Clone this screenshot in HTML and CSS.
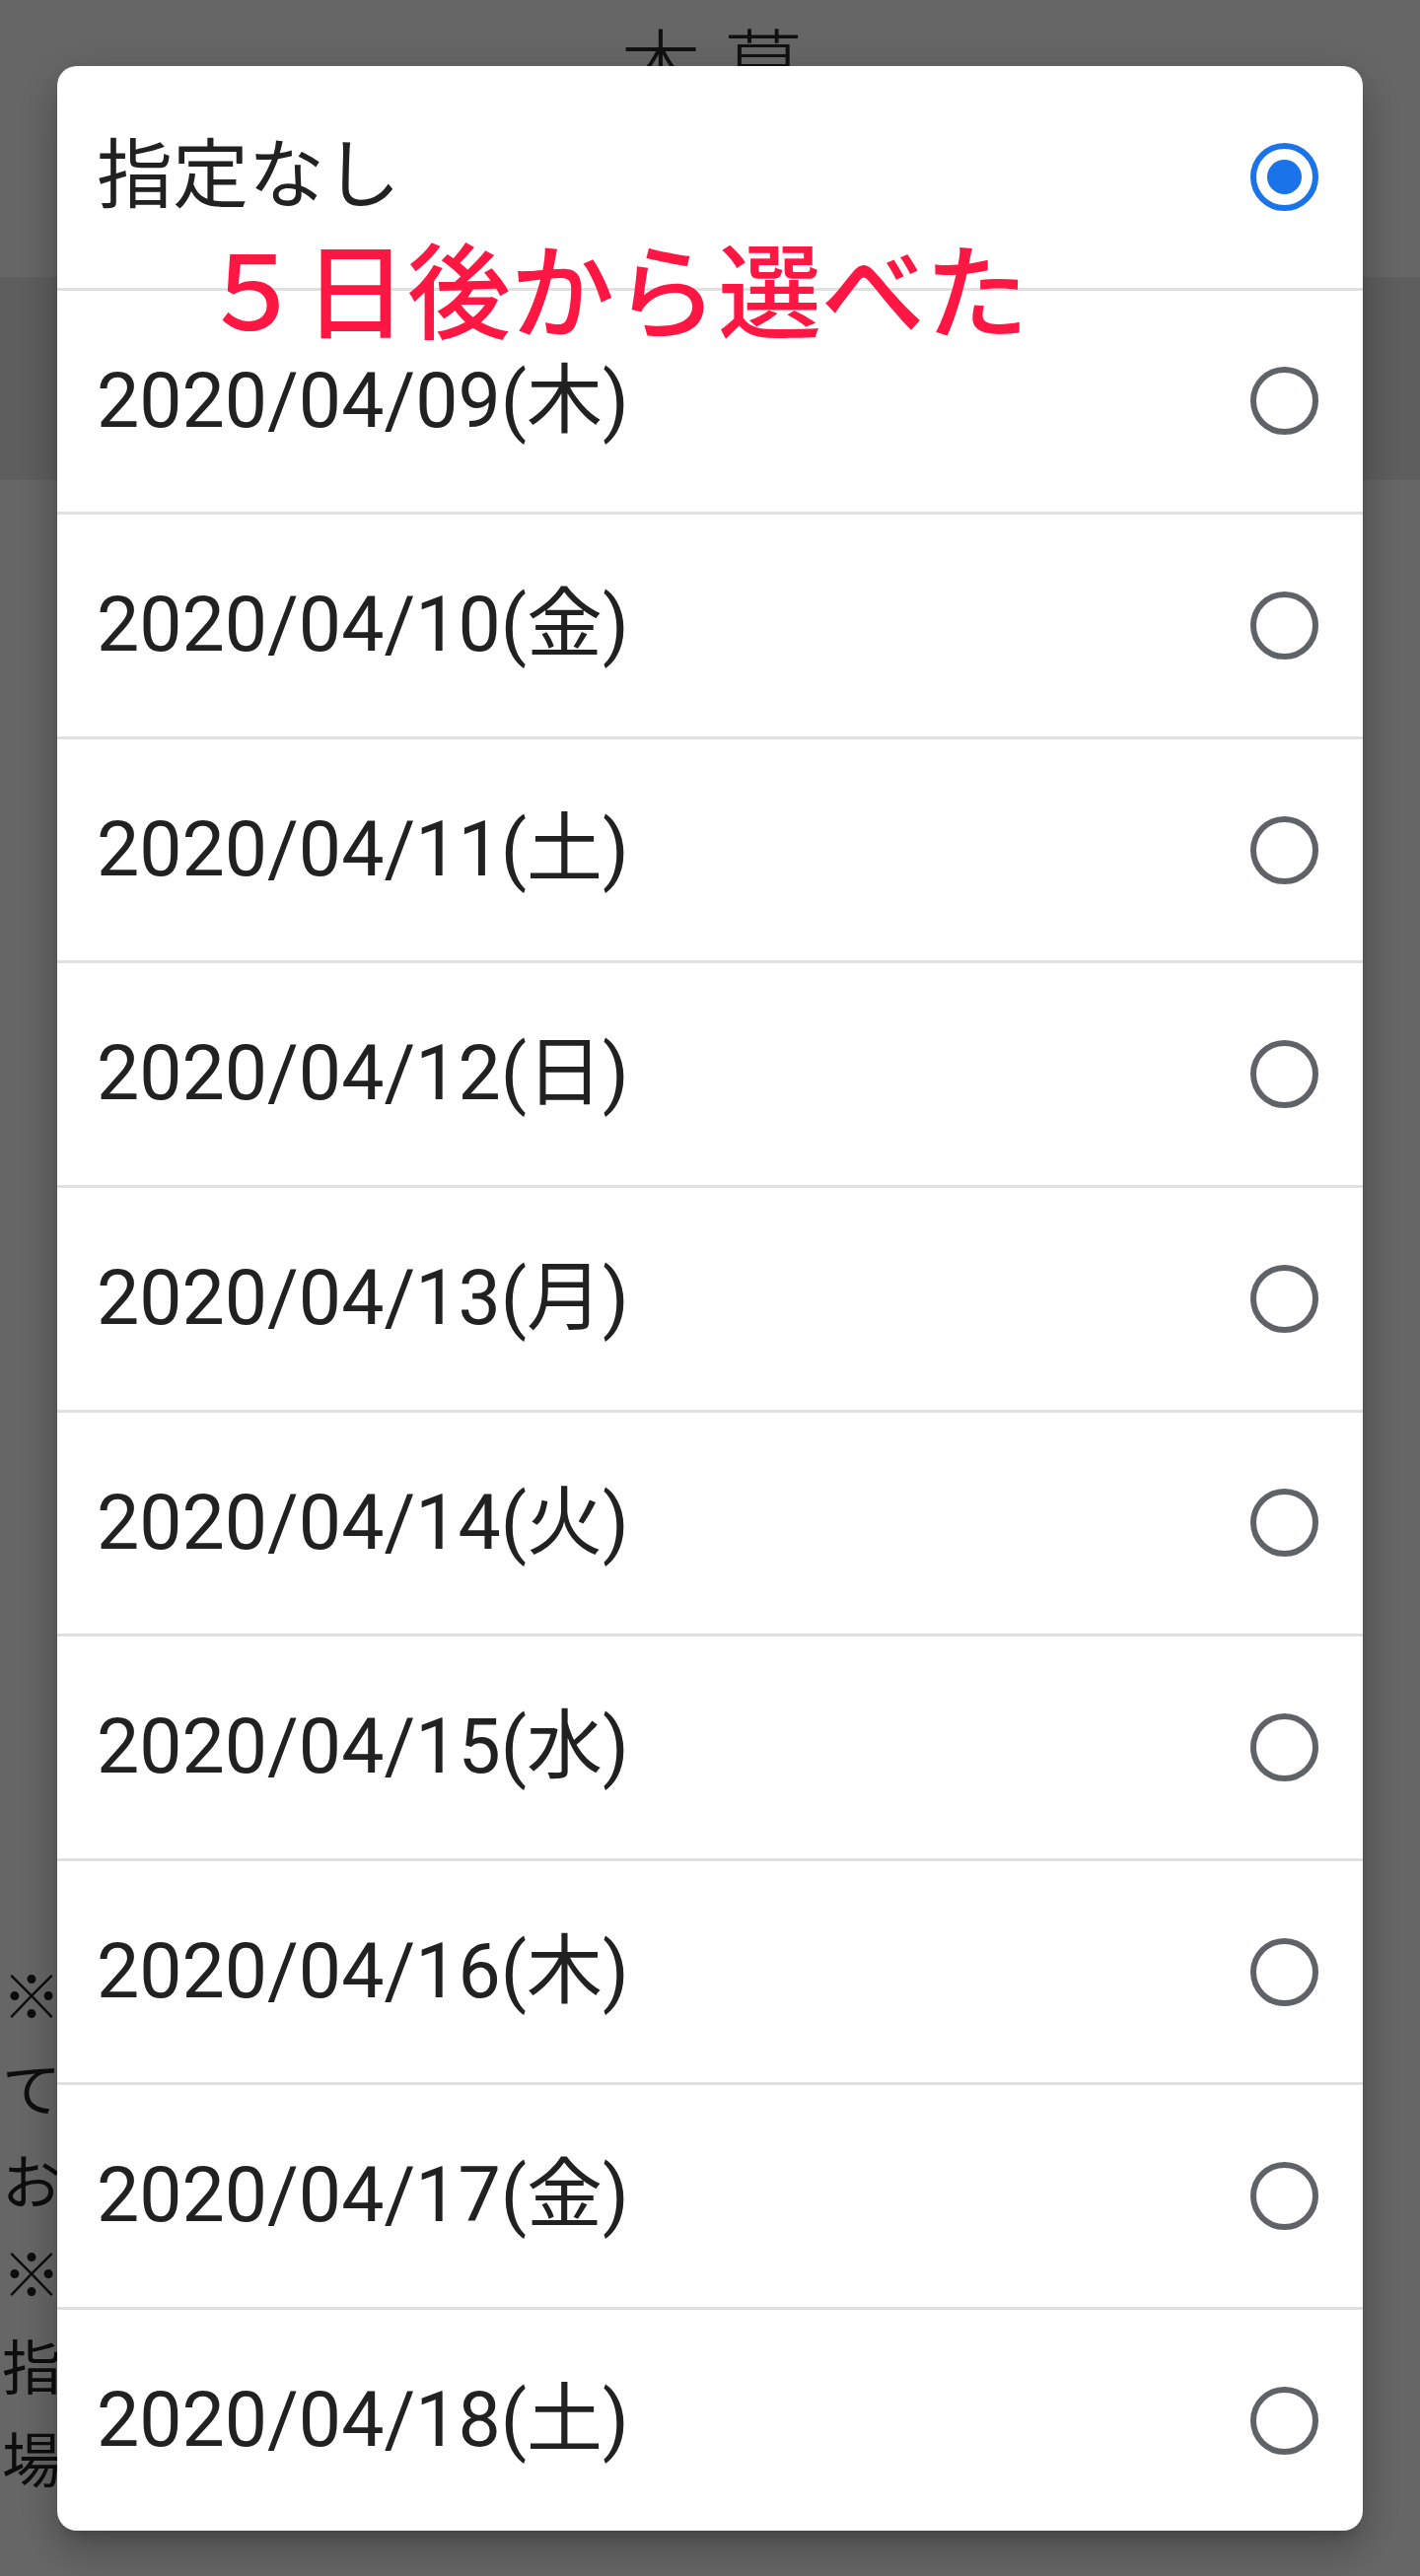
FILE: index.html
```html
<!DOCTYPE html>
<html lang="ja">
<head>
<meta charset="utf-8">
<title>お届け日指定</title>
<link rel="stylesheet" href="styles.css">
</head>
<body>
<div class="page">
  <header class="page-header">
    <h1 class="page-title">本募</h1>
  </header>
  <div class="page-band"></div>
  <div class="page-body">
    <div class="notes">
      <p class="note-line">※お届け日はご注文日より５日後以降の日を指定し</p>
      <p class="note-line">てください。</p>
      <p class="note-line">お届け日の指定がない場合は最短でお届けします。</p>
      <p class="note-line">※天候・交通事情等によりお届けが遅れる場合や、</p>
      <p class="note-line">指定日にお届けできない</p>
      <p class="note-line">場合がございます。</p>
    </div>
  </div>
</div>

<div class="scrim">
  <div class="dialog" role="dialog">
    <ul class="options">
      <li class="option"><span class="label">指定なし</span><span class="radio checked"></span></li>
      <li class="option"><span class="label">2020/04/09(木)</span><span class="radio"></span></li>
      <li class="option"><span class="label">2020/04/10(金)</span><span class="radio"></span></li>
      <li class="option"><span class="label">2020/04/11(土)</span><span class="radio"></span></li>
      <li class="option"><span class="label">2020/04/12(日)</span><span class="radio"></span></li>
      <li class="option"><span class="label">2020/04/13(月)</span><span class="radio"></span></li>
      <li class="option"><span class="label">2020/04/14(火)</span><span class="radio"></span></li>
      <li class="option"><span class="label">2020/04/15(水)</span><span class="radio"></span></li>
      <li class="option"><span class="label">2020/04/16(木)</span><span class="radio"></span></li>
      <li class="option"><span class="label">2020/04/17(金)</span><span class="radio"></span></li>
      <li class="option"><span class="label">2020/04/18(土)</span><span class="radio"></span></li>
    </ul>
    <p class="annotation">５日後から選べた</p>
  </div>
</div>
</body>
</html>
```

FILE: styles.css
```css
* {
  box-sizing: border-box;
}

html, body {
  margin: 0;
  padding: 0;
}

body {
  width: 1440px;
  height: 2613px;
  overflow: hidden;
  background: #ffffff;
  font-family: Roboto, "Noto Sans CJK JP", sans-serif;
}

/* ---------- underlying page ---------- */
.page {
  display: flex;
  flex-direction: column;
  height: 2613px;
}

.page-header {
  height: 281px;
  background: #ffffff;
  display: flex;
  justify-content: center;
  padding: 22px 0 0 26px;
}

.page-title {
  margin: 0;
  font-family: "Noto Sans CJK JP", sans-serif;
  font-weight: 300;
  font-size: 82px;
  line-height: 1;
  letter-spacing: 22px;
  color: #2a2a2a;
}

.page-band {
  height: 206px;
  background: #ebebeb;
}

.page-body {
  flex: 1;
  padding: 1488px 0 0 2px;
}

.notes {
  display: flex;
  flex-direction: column;
}

.note-line {
  margin: 0;
  font-family: "Noto Sans CJK JP", sans-serif;
  font-size: 60px;
  line-height: 94px;
  color: #222222;
  white-space: nowrap;
}

/* ---------- modal ---------- */
.scrim {
  position: fixed;
  inset: 0;
  background: rgba(0, 0, 0, 0.6);
  display: flex;
  justify-content: center;
  align-items: flex-start;
  padding-top: 67px;
}

.dialog {
  position: relative;
  width: 1324px;
  height: 2500px;
  background: #ffffff;
  border-radius: 20px;
  overflow: hidden;
  box-shadow:
    0 24px 38px 3px rgba(0, 0, 0, 0.14),
    0 9px 46px 8px rgba(0, 0, 0, 0.12),
    0 11px 15px -7px rgba(0, 0, 0, 0.2);
}

.options {
  list-style: none;
  margin: 0;
  padding: 0;
  display: flex;
  flex-direction: column;
}

.option {
  height: 224.6px;
  flex: none;
  display: flex;
  align-items: center;
  justify-content: space-between;
  padding: 0 45px 0 40px;
}

.option + .option {
  height: 227.6px;
  border-top: 3px solid #e0e0e0;
}

.label {
  font-family: Roboto, "Noto Sans CJK JP", sans-serif;
  font-size: 77px;
  line-height: 1.2;
  color: #212121;
}

.radio {
  width: 69px;
  height: 69px;
  flex: none;
  border-radius: 50%;
  border: 6.8px solid #5f6368;
  display: flex;
  align-items: center;
  justify-content: center;
}

.radio.checked {
  border-color: #1a73e8;
}

.radio.checked::after {
  content: "";
  width: 35px;
  height: 35px;
  border-radius: 50%;
  background: #1a73e8;
}

.annotation {
  position: absolute;
  left: 145px;
  top: 170px;
  margin: 0;
  font-family: "Noto Sans CJK JP", sans-serif;
  font-weight: 500;
  font-size: 105px;
  line-height: 1;
  color: #ff1744;
  white-space: nowrap;
}
```
